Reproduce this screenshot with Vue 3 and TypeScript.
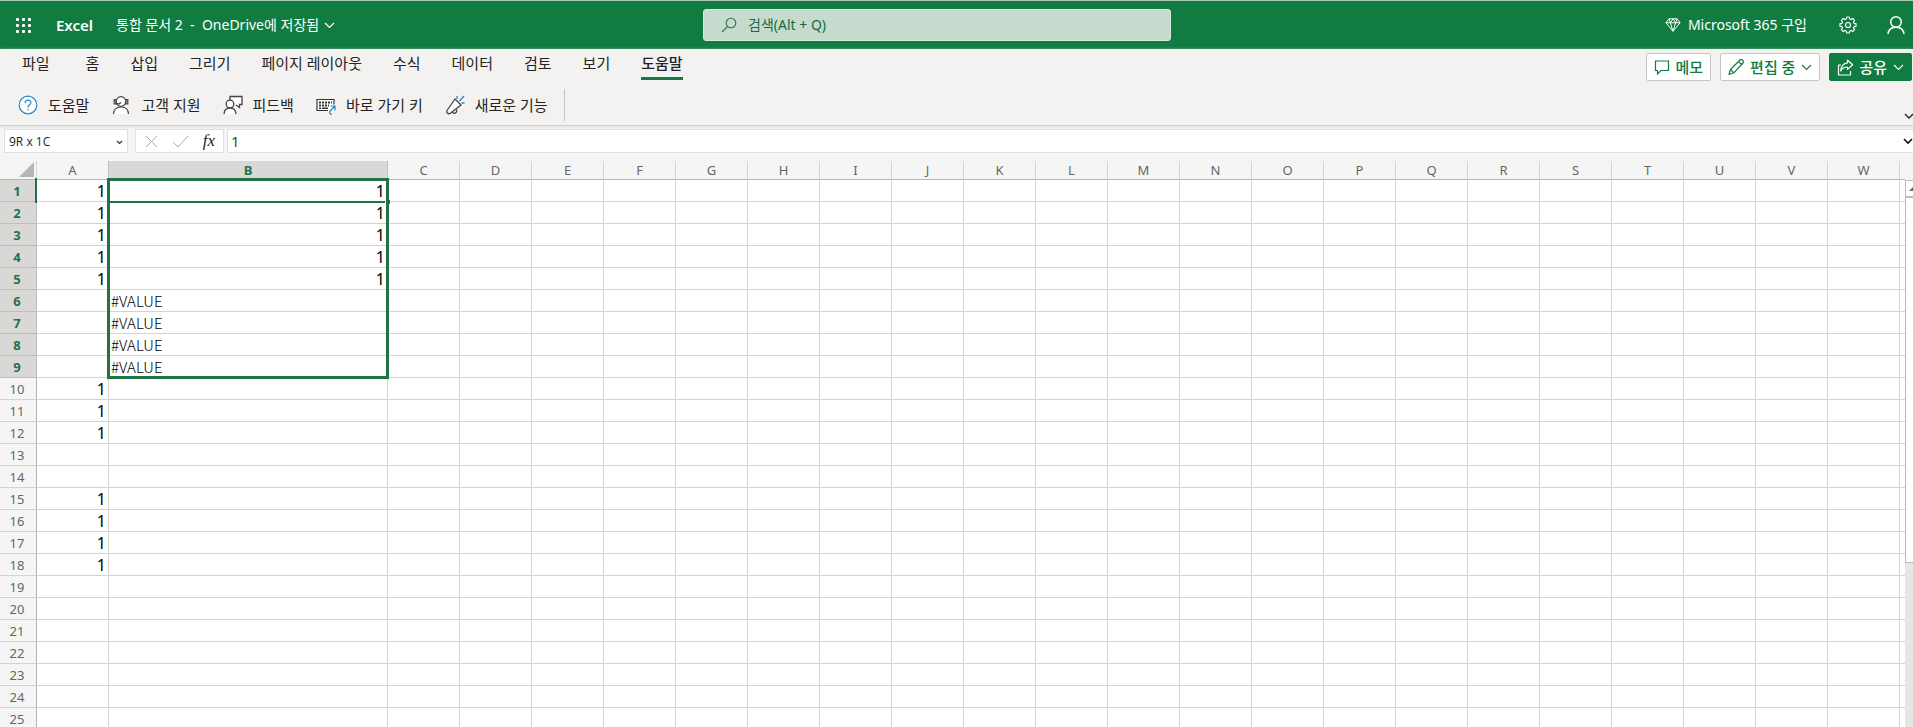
<script setup lang="ts">
import { ref } from 'vue'

interface Row {
  n: number
  a: string
  b: string
}

const tabs = ['파일', '홈', '삽입', '그리기', '페이지 레이아웃', '수식', '데이터', '검토', '보기', '도움말']
const activeTab = ref('도움말')
const columns = 'ABCDEFGHIJKLMNOPQRSTUVW'.split('')
const rowsWithOne = [1, 2, 3, 4, 5, 10, 11, 12, 15, 16, 17, 18]

const rows: Row[] = Array.from({ length: 25 }, (_, i) => {
  const n = i + 1
  return {
    n,
    a: rowsWithOne.includes(n) ? '1' : '',
    b: n <= 5 ? '1' : n <= 9 ? '#VALUE' : '',
  }
})

const dots = [1, 7, 13]
const nameBox = ref('9R x 1C')
const formula = ref('1')
const query = ref('')
</script>

<template>
  <div class="app">
    <header class="top">
      <div class="top-left">
        <button class="plain" aria-label="앱 시작 관리자">
          <svg width="17" height="17" viewBox="0 0 17 17" fill="#fff">
            <template v-for="y in dots" :key="y">
              <rect v-for="x in dots" :key="x" :x="x" :y="y" width="3" height="3" rx="1" />
            </template>
          </svg>
        </button>
        <strong class="brand">Excel</strong>
        <button class="plain doc">
          <span>통합 문서 2&nbsp; -&nbsp; OneDrive에 저장됨</span>
          <svg width="11" height="7" viewBox="0 0 11 7"><path d="M1 1l4.500 4.500L10 1" fill="none" stroke="#fff" stroke-width="1.200" /></svg>
        </button>
      </div>
      <label class="search">
        <svg width="16" height="16" viewBox="0 0 16 16" fill="none" stroke="#23734a" stroke-width="1.100">
          <circle cx="10" cy="6" r="4.800" /><path d="M6.500 9.500L1 15" />
        </svg>
        <input v-model="query" type="text" aria-label="검색" placeholder="검색(Alt + Q)" />
      </label>
      <div class="top-right">
        <a class="buy" href="#">
          <svg width="16" height="16" viewBox="0 0 18 16" fill="none" stroke="#fff" stroke-width="1.100" stroke-linejoin="round">
            <path d="M4.500 1h9L17 5.500 9 15 1 5.500zM1 5.500h16M6 5.500L9 15l3-9.500L9 1 6 5.500 4.500 1M12 5.500L13.500 1" />
          </svg>
          Microsoft 365 구입
        </a>
        <button class="plain gear" aria-label="설정">
          <svg width="18" height="18" viewBox="0 0 18 18" fill="none" stroke="#fff" stroke-width="1.200" stroke-linejoin="round">
            <path d="M7.700 1h2.600l.4 2 1.300.5 1.700-1.100 1.900 1.900-1.100 1.700.5 1.300 2 .4v2.600l-2 .4-.5 1.300 1.100 1.700-1.900 1.900-1.700-1.100-1.300.5-.4 2H7.700l-.4-2-1.300-.5-1.700 1.100-1.900-1.900L3.500 12 3 10.700l-2-.4V7.700l2-.4L3.500 6 2.400 4.300l1.900-1.900L6 3.500 7.300 3z" />
            <circle cx="9" cy="9" r="2.500" />
          </svg>
        </button>
        <button class="plain" aria-label="계정">
          <svg width="18" height="20" viewBox="0 0 18 20" fill="none" stroke="#fff" stroke-width="1.500">
            <circle cx="9" cy="7" r="5.300" /><path d="M1 19c.5-4.500 3.500-6.700 8-6.700s7.500 2.200 8 6.700" />
          </svg>
        </button>
      </div>
    </header>

    <section class="ribbon">
      <div class="tab-row">
        <nav class="tabs">
          <button
            v-for="t in tabs"
            :key="t"
            class="tab"
            :class="{ active: t === activeTab }"
            @click="activeTab = t"
          >{{ t }}</button>
        </nav>
        <div class="actions">
          <button class="action">
            <svg width="16" height="16" viewBox="0 0 16 16" fill="none" stroke="#107c41" stroke-width="1.200"><path d="M1.500 2h13v9.500H7L3.500 15v-3.500h-2z" /></svg>
            메모
          </button>
          <button class="action">
            <svg width="17" height="18" viewBox="0 0 17 18" fill="none" stroke="#107c41" stroke-width="1.200" stroke-linejoin="round"><path d="M1 16.500l1.500-5L12 2c1.500-1.500 4.500 1.200 3 3L5.800 14.800zM10.500 3.500l3.200 3.200M2.500 11.500l3.300 3.300" /></svg>
            편집 중
            <svg width="11" height="7" viewBox="0 0 11 7" class="chev"><path d="M1 1l4.500 4.500L10 1" fill="none" stroke="#107c41" stroke-width="1.100" /></svg>
          </button>
          <button class="action share">
            <svg width="17" height="17" viewBox="0 0 17 17" fill="none" stroke="#fff" stroke-width="1.200" stroke-linejoin="round"><path d="M4 6H1.500v10h12v-4M10.500 1.200l5.200 4.600-5.200 4.600V8C7 8 5 9.500 3.800 12c0-4 2.500-8 6.700-8.200z" /></svg>
            공유
            <svg width="11" height="7" viewBox="0 0 11 7" class="chev"><path d="M1 1l4.500 4.500L10 1" fill="none" stroke="#fff" stroke-width="1.100" /></svg>
          </button>
        </div>
      </div>
      <div class="tools">
        <button class="tool">
          <svg width="20" height="20" viewBox="0 0 20 20" fill="none" stroke="#2b88c8" stroke-width="1.200">
            <circle cx="10" cy="10" r="8.800" fill="#fff" /><path d="M7.200 8c0-3.800 5.700-3.800 5.700-.4C12.900 9.800 10 9.800 10 12.500M10 13.700v1.500" />
          </svg>
          도움말
        </button>
        <button class="tool">
          <svg width="20" height="20" viewBox="0 0 20 20" fill="none" stroke="#444" stroke-width="1.200">
            <circle cx="10" cy="6.500" r="4.800" fill="#fff" /><path d="M5 4.500v4.500H3.200V4.500zM15 4.500h1.800V9H15zM6 8.500l2 .5 2-1.500" /><path d="M2.500 19c.3-4.800 3-7 7.500-7s7.200 2.200 7.500 7" fill="#fff" />
          </svg>
          고객 지원
        </button>
        <button class="tool">
          <svg width="20" height="20" viewBox="0 0 20 20" fill="none" stroke="#444" stroke-width="1.300">
            <path d="M7 5V1.500h12v8h-2.500v3L13 10" fill="#fff" /><circle cx="7" cy="9" r="3.800" fill="#fff" /><path d="M1 19c.3-4 2.500-6 6-6s5.700 2 6 6" fill="#fff" />
          </svg>
          피드백
        </button>
        <button class="tool">
          <svg width="20" height="20" viewBox="0 0 20 20" fill="none" stroke="#333" stroke-width="1.200">
            <path d="M12 15.500H1v-11h17v5" fill="#fff" /><path d="M3 7.500h13M3 10.500h10" stroke-width="2" stroke-dasharray="2 1" /><path d="M3 13.200h2M6 13.200h6" stroke-width="1.600" />
            <path d="M14.500 11h4.500v4.500M19 11l-4 4c-2 2-2 4 1 4.300" stroke="#2b88c8" />
          </svg>
          바로 가기 키
        </button>
        <button class="tool">
          <svg width="20" height="20" viewBox="0 0 20 20" fill="none" stroke="#444" stroke-width="1.300" stroke-linejoin="round">
            <path d="M10 4l6 6-11 8.500c-2 .8-4-1-3-3z" fill="#fff" /><path d="M7.500 17c1 2.500 5 1.500 4-2.500" /><path d="M12 4V1M14.500 6l4.500-5M16.500 8h3" stroke="#2b88c8" />
          </svg>
          새로운 기능
        </button>
        <span class="divider"></span>
        <button class="plain expand" aria-label="리본 표시 옵션">
          <svg width="10" height="7" viewBox="0 0 10 7"><path d="M1 1l4 4 4-4" fill="none" stroke="#222" stroke-width="1.300" /></svg>
        </button>
      </div>
    </section>

    <section class="formula-bar">
      <div class="box name">
        <input v-model="nameBox" type="text" aria-label="이름 상자" />
        <button class="plain" aria-label="이름 목록">
          <svg width="7" height="5" viewBox="0 0 7 5"><path d="M1 1l2.500 2.500L6 1" fill="none" stroke="#333" stroke-width="1.200" /></svg>
        </button>
      </div>
      <div class="box fx">
        <button class="plain" aria-label="취소">
          <svg width="13" height="13" viewBox="0 0 13 13"><path d="M1 1l11 11M12 1L1 12" stroke="#aaa" /></svg>
        </button>
        <button class="plain" aria-label="입력">
          <svg width="17" height="13" viewBox="0 0 17 13"><path d="M1 7l5 5L16 1" fill="none" stroke="#aaa" /></svg>
        </button>
        <button class="plain fn" aria-label="함수 삽입">fx</button>
      </div>
      <div class="box entry">
        <input v-model="formula" type="text" aria-label="수식 입력줄" />
        <button class="plain" aria-label="수식 입력줄 확장">
          <svg width="10" height="7" viewBox="0 0 10 7"><path d="M1 1l4 4 4-4" fill="none" stroke="#111" stroke-width="1.600" /></svg>
        </button>
      </div>
    </section>

    <main class="sheet">
      <div class="grid">
        <table>
          <colgroup>
            <col class="c-head" />
            <col v-for="c in columns" :key="c" :class="c === 'B' ? 'c-wide' : 'c-std'" />
            <col class="c-std" />
          </colgroup>
          <thead>
            <tr>
              <td class="corner">
                <svg width="15" height="15" viewBox="0 0 15 15"><path d="M15 0v15H0z" fill="#b5b5b5" /></svg>
              </td>
              <th v-for="c in columns" :key="c" scope="col" :class="{ sel: c === 'B', before: c === 'A' }">{{ c }}</th>
              <td class="corner"></td>
            </tr>
          </thead>
          <tbody>
            <tr v-for="r in rows" :key="r.n">
              <th scope="row" :class="{ sel: r.n <= 9 }">{{ r.n }}</th>
              <td class="num">{{ r.a }}</td>
              <td :class="r.b === '1' ? 'num' : 'txt'">{{ r.b }}</td>
              <td v-for="c in columns.slice(2)" :key="c"></td>
              <td></td>
            </tr>
          </tbody>
        </table>
        <div class="row-mark"></div>
        <div class="selection"><div class="active-line"></div><div class="handle"></div></div>
      </div>
      <div class="scroll">
        <button class="up" aria-label="위로 스크롤">
          <svg width="10" height="5" viewBox="0 0 10 5"><path d="M5 0l5 5H0z" fill="#666" /></svg>
        </button>
        <div class="thumb"></div>
      </div>
    </main>
  </div>
</template>

<style>
body {
  overflow: hidden;
}
</style>

<style scoped>
.app {
  display: flex;
  flex-direction: column;
  height: 100vh;
  overflow: hidden;
  background: #f5f5f5;
  color: #252423;
  font-family: "Noto Sans", "Noto Sans CJK KR", sans-serif;
  font-size: 14px;
  line-height: 20px;
}
button, input {
  font: inherit;
  color: inherit;
  margin: 0;
  padding: 0;
  border: 0;
  background: none;
  outline: none;
}
button {
  white-space: nowrap;
}
svg {
  display: block;
  flex: none;
}
.plain {
  display: flex;
  align-items: center;
}
.top {
  display: flex;
  align-items: center;
  flex: none;
  height: 48px;
  border-top: 1px solid #a9cdb8;
  background: #107c41;
  color: #fff;
}
.top-left {
  display: flex;
  align-items: center;
  box-sizing: border-box;
  width: 36.75%;
  padding-left: 15px;
}
.brand {
  margin: 0 23px 0 24px;
  font-size: 15px;
  font-weight: 600;
}
.doc {
  gap: 5px;
}
.search {
  display: flex;
  align-items: center;
  gap: 11px;
  box-sizing: border-box;
  width: 468px;
  height: 32px;
  padding: 0 17px;
  border: 1px solid #d5ebdd;
  border-radius: 3px;
  background: #c4dbce;
  color: #186b40;
}
.search input {
  flex: 1;
}
.search input::placeholder {
  color: #186b40;
  opacity: 1;
}
.top-right {
  display: flex;
  align-items: center;
  margin-left: auto;
  padding-right: 8px;
}
.buy {
  display: flex;
  align-items: center;
  gap: 7px;
  color: #fff;
  text-decoration: none;
}
.gear {
  margin: 0 30px 0 32px;
}
.ribbon {
  flex: none;
  border-bottom: 1px solid #d0d0d0;
  background: #f3f2f1;
  box-shadow: 0 1px 3px #ddd;
}
.tab-row {
  display: flex;
  justify-content: space-between;
  height: 36px;
}
.tabs {
  display: flex;
  gap: 31px;
  padding-left: 22px;
}
.tab {
  height: 31px;
  font-size: 15px;
  border-bottom: 3px solid transparent;
}
.tab:first-child {
  margin-right: 5px;
}
.tab.active {
  border-color: #107c41;
  font-weight: 500;
}
.actions {
  display: flex;
  gap: 9px;
  padding: 4px 1px 0 0;
}
.action {
  display: flex;
  align-items: center;
  gap: 5px;
  box-sizing: border-box;
  height: 28px;
  padding: 0 7px;
  border: 1px solid #c6c6c6;
  border-radius: 2px;
  background: #fff;
  color: #107c41;
  font-weight: 500;
  font-size: 15px;
}
.chev {
  margin-left: 1px;
}
.share {
  border-color: #107c41;
  background: #107c41;
  color: #fff;
}
.tools {
  display: flex;
  align-items: center;
  gap: 22px;
  height: 40px;
  padding-left: 18px;
}
.tool {
  display: flex;
  align-items: center;
  gap: 10px;
  font-size: 15px;
  line-height: 18px;
}
.divider {
  width: 1px;
  height: 32px;
  margin-left: -6px;
  background: #c4c4c4;
}
.expand {
  align-self: flex-end;
  margin: 0 -1px 5px auto;
}
.formula-bar {
  display: flex;
  flex: none;
  padding: 3px 0 8px 4px;
}
.box {
  display: flex;
  align-items: center;
  box-sizing: border-box;
  height: 24px;
  border: 1px solid #e1e1e1;
  background: #fff;
}
.name {
  width: 124px;
  padding: 2px 4px 0 4px;
  margin-right: 7px;
  font-family: "Open Sans", sans-serif;
  font-size: 12px;
}
.name input {
  flex: 1;
  min-width: 0;
}
.fx {
  justify-content: space-between;
  width: 89px;
  padding: 0 8px 0 9px;
  margin-right: 3px;
}
.fn {
  font: italic 400 17px "Liberation Serif", serif;
}
.entry {
  flex: 1;
  padding: 0 0 0 3px;
  border-right: 0;
  font-size: 15px;
  color: #444;
}
.entry input {
  flex: 1;
}
.sheet {
  display: flex;
  flex: 1;
  min-height: 0;
}
.grid {
  position: relative;
  flex: 1;
  min-width: 0;
  overflow: hidden;
}
table {
  table-layout: fixed;
  width: 0;
  border-collapse: separate;
  border-spacing: 0;
}
.c-head {
  width: 37px;
}
.c-std {
  width: 72px;
}
.c-wide {
  width: 279px;
}
th, td {
  box-sizing: border-box;
  height: 22px;
  padding: 0;
  border-right: 1px solid #d4d4d4;
  border-bottom: 1px solid #d4d4d4;
  line-height: 20px;
}
tbody td {
  background: #fff;
  color: #000;
}
th {
  color: #666;
  font-size: 13px;
  font-weight: 400;
}
thead th, .corner {
  height: 19px;
  line-height: 18px;
  border-bottom-color: #b5b5b5;
  background: #f5f5f5;
}
.corner svg {
  margin: 0 2px 1px auto;
}
tbody th {
  border-right-color: #b5b5b5;
  background: #f5f5f5;
  padding: 1px 2px 0 0;
}
th.sel {
  border-color: #bdbdbd;
  background: #d9d8d7;
  color: #217346;
  font-weight: 700;
}
th.before {
  border-right-color: #bdbdbd;
}
.num {
  padding-right: 2px;
  font-size: 16px;
  text-align: right;
}
.txt {
  padding-left: 2px;
  font-family: "Noto Sans CJK KR", sans-serif;
  font-size: 15px;
  font-weight: 300;
}
.row-mark {
  position: absolute;
  left: 35px;
  top: 17px;
  width: 2px;
  height: 25px;
  background: #217346;
}
.selection {
  position: absolute;
  left: 107px;
  top: 17px;
  box-sizing: border-box;
  width: 282px;
  height: 201px;
  border: 3px solid #217346;
}
.active-line {
  margin-top: 20px;
  width: 275px;
  height: 2px;
  background: #217346;
}
.handle {
  position: absolute;
  right: -4px;
  top: 19px;
  width: 4px;
  height: 4px;
  background: #217346;
}
.scroll {
  display: flex;
  flex-direction: column;
  flex: none;
  width: 8px;
  margin-top: 19px;
  overflow: hidden;
  background: #e6e6e6;
}
.up {
  display: flex;
  align-items: center;
  flex: none;
  box-sizing: border-box;
  width: 17px;
  height: 17px;
  padding-left: 3px;
  border: 1px solid #bbb;
  background: #fff;
}
.thumb {
  box-sizing: border-box;
  width: 17px;
  height: 67%;
  border: 1px solid #bbb;
  background: #fff;
}
</style>
